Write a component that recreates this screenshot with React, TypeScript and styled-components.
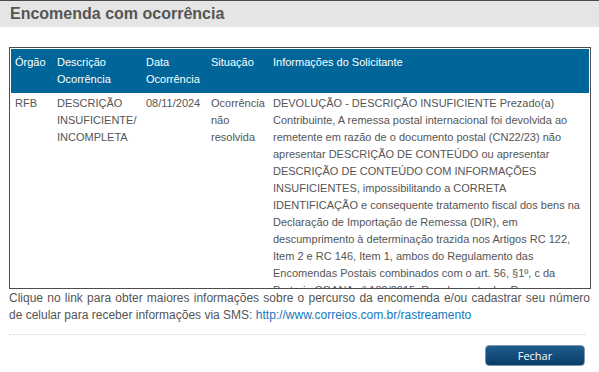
import React from 'react';
import styled, { createGlobalStyle } from 'styled-components';

const GlobalStyle = createGlobalStyle`
  html, body {
    margin: 0;
    padding: 0;
    background: #fff;
    font-family: 'Liberation Sans', Arial, sans-serif;
  }
`;

const Dialog = styled.div`
  width: 599px;
  height: 372px;
  overflow: hidden;
  border-top: 1px solid #4a4a4a;
  box-sizing: border-box;
`;

const TitleBar = styled.div`
  background: #e5e5e5;
  height: 26px;
  padding: 0 10px;
  display: flex;
  align-items: center;
`;

const Title = styled.h1`
  margin: 0;
  font-size: 16px;
  font-weight: bold;
  color: #555;
  line-height: 26px;
`;

const Content = styled.div`
  padding: 20px 8px 0 9px;
`;

const ScrollBox = styled.div`
  border: 1px solid #4d4d4d;
  padding: 1px;
  height: 238px;
  overflow: hidden;
`;

const Table = styled.table`
  width: 100%;
  border-collapse: collapse;
  table-layout: fixed;
  font-size: 11px;
  line-height: 17px;
`;

const HeadCell = styled.th`
  background: #006699;
  color: #fff;
  font-weight: normal;
  text-align: left;
  vertical-align: top;
  padding: 5px 4px;
`;

const Cell = styled.td`
  color: #555;
  vertical-align: top;
  padding: 2px 4px;
`;

const Note = styled.p`
  margin: 1px 1px 0 0;
  font-size: 12px;
  line-height: 17px;
  color: #555;
  text-align: justify;
`;

const Link = styled.a`
  color: #1477bd;
  text-decoration: none;
`;

const Divider = styled.hr`
  margin: 10px 6px 0 0;
  border: 0;
  border-top: 1px dotted #d0d0d0;
`;

const Actions = styled.div`
  display: flex;
  justify-content: flex-end;
  padding: 10px 6px 0 0;
`;

const Button = styled.button`
  width: 100px;
  height: 21px;
  border: 1px solid #7f96ad;
  border-radius: 4px;
  background: linear-gradient(#1d5e8e, #0a3c68);
  color: #fff;
  font-family: 'Open Sans', 'Liberation Sans', sans-serif;
  font-size: 11px;
  padding: 0;
  cursor: pointer;
`;

const columns = [
  { title: 'Órgão', width: 42 },
  { title: 'Descrição Ocorrência', width: 89 },
  { title: 'Data Ocorrência', width: 65 },
  { title: 'Situação', width: 62 },
  { title: 'Informações do Solicitante', width: undefined },
];

const info =
  'DEVOLUÇÃO - DESCRIÇÃO INSUFICIENTE Prezado(a) Contribuinte, A remessa postal internacional foi devolvida ao remetente em razão de o documento postal (CN22/23) não apresentar DESCRIÇÃO DE CONTEÚDO ou apresentar DESCRIÇÃO DE CONTEÚDO COM INFORMAÇÕES INSUFICIENTES, impossibilitando a CORRETA IDENTIFICAÇÃO e consequente tratamento fiscal dos bens na Declaração de Importação de Remessa (DIR), em descumprimento à determinação trazida nos Artigos RC 122, Item 2 e RC 146, Item 1, ambos do Regulamento das Encomendas Postais combinados com o art. 56, §1º, c da Portaria COANA nº 189/2015. Regulamento das Remessas Postais.';

const App: React.FC = () => (
  <>
    <GlobalStyle />
    <Dialog>
      <TitleBar>
        <Title>Encomenda com ocorrência</Title>
      </TitleBar>
      <Content>
        <ScrollBox>
          <Table>
            <colgroup>
              {columns.map((col, index) => (
                <col key={index} style={col.width ? { width: col.width } : undefined} />
              ))}
            </colgroup>
            <thead>
              <tr>
                {columns.map((col, index) => (
                  <HeadCell key={index}>{col.title}</HeadCell>
                ))}
              </tr>
            </thead>
            <tbody>
              <tr>
                <Cell>RFB</Cell>
                <Cell>DESCRIÇÃO INSUFICIENTE/ INCOMPLETA</Cell>
                <Cell>08/11/2024</Cell>
                <Cell>Ocorrência não resolvida</Cell>
                <Cell>{info}</Cell>
              </tr>
            </tbody>
          </Table>
        </ScrollBox>
        <Note>
          Clique no link para obter maiores informações sobre o percurso da encomenda e/ou cadastrar seu número
          de celular para receber informações via SMS:{' '}
          <Link href="#">http://www.correios.com.br/rastreamento</Link>
        </Note>
        <Divider />
        <Actions>
          <Button>Fechar</Button>
        </Actions>
      </Content>
    </Dialog>
  </>
);

export default App;
